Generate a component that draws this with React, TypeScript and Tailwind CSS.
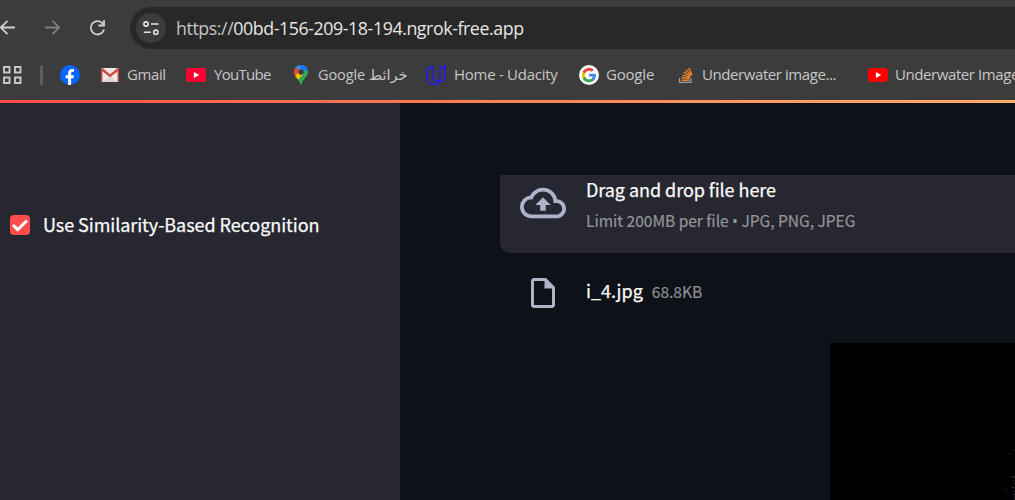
import type { ReactNode } from 'react';

function Bookmark({ icon, label, className, labelClass }: { icon: ReactNode; label?: string; className: string; labelClass?: string }) {
  return (
    <div className={`flex h-5 shrink-0 items-center whitespace-nowrap ${className}`}>
      {icon}
      {label && <span className={`leading-5 ${labelClass ?? ''}`}>{label}</span>}
    </div>
  );
}

function FacebookIcon() {
  return (
    <svg className="h-5 w-5 shrink-0" viewBox="0 0 20 20">
      <circle cx="10" cy="10" r="10" fill="#0866ff" />
      <path d="M8.1 20v-6.7H5.6v-3h2.5V8.600c0-3.400 1.700-4.700 4.300-4.700.8 0 1.200.1 1.600.2v2.700h-1.200c-1.200 0-1.700.5-1.700 1.800v1.700h2.800l-.5 3h-2.300V20a10 10 0 0 1-3 0Z" fill="#fff" />
    </svg>
  );
}

function GmailIcon() {
  return (
    <svg className="h-5 w-5 shrink-0" viewBox="0 0 20 20">
      <rect x="1" y="3" width="18" height="14" rx="1.5" fill="#eceaea" />
      <path d="M3 17 10 11l7 6Z" fill="#d8d6d6" />
      <path d="M1 4.500C1 3.600 1.600 3 2.500 3L10 9.200 17.500 3c.9 0 1.500.6 1.500 1.500v11c0 .9-.6 1.500-1.500 1.500V6.400L10 12.300 2.500 6.400V17C1.600 17 1 16.400 1 15.500Z" fill="#d54b3d" />
    </svg>
  );
}

function YouTubeIcon({ wide }: { wide?: boolean }) {
  return (
    <svg className="h-5 w-5 shrink-0" viewBox="0 0 20 20">
      <rect x="0" y="3" width="20" height="14" rx={wide ? 3.2 : 2.6} fill={wide ? '#ff0000' : '#ff0033'} />
      <path d="m7.900 7 5.300 3-5.300 3Z" fill="#fff" />
    </svg>
  );
}

function MapsIcon() {
  return (
    <svg className="h-5 w-[14px] shrink-0" viewBox="0 0 14 20">
      <clipPath id="pin">
        <path d="M7 0a7 7 0 0 1 7 7c0 2.600-1.400 4.300-3 6.300C9.300 15.400 8.300 16.800 7.600 19.200c-.2.900-1 .9-1.200 0C5.700 16.800 4.700 15.400 3 13.300 1.400 11.300 0 9.600 0 7a7 7 0 0 1 7-7Z" />
      </clipPath>
      <g clipPath="url(#pin)">
        <path d="M0 0h14v20H0Z" fill="#34a853" />
        <path d="M0 0h14v5L7 7Z" fill="#4285f4" />
        <path d="M4 0h10v5l-4.500 1Z" fill="#1a73e8" />
        <path d="M0 0 1.500 2.400 7 7 1.500 12 0 10Z" fill="#ea4335" />
        <path d="m1 11 6-7 2.200 5-6.200 7Z" fill="#fbbc04" />
      </g>
      <circle cx="7" cy="7" r="2.700" fill="#3c3c3c" />
    </svg>
  );
}

function UdacityIcon() {
  return (
    <svg className="h-5 w-5 shrink-0" viewBox="0 0 20 20" fill="none" stroke="#2015ff" strokeWidth="1.500" strokeLinejoin="round">
      <path d="M6.400 1 .9 3.800v8.400c0 4.300 3 7 7 7 4 0 6.200-2.600 6.200-6.800V3.200L19.200.9v9.600c0 3.500-2.200 5.700-6 5.700-4.500 0-6.800-2.200-6.800-6V1Z" />
    </svg>
  );
}

function GoogleIcon() {
  return (
    <svg className="h-5 w-5 shrink-0" viewBox="0 0 20 20">
      <circle cx="10" cy="10" r="10" fill="#fff" />
      <g transform="translate(2.800 2.800) scale(.6)">
        <path fill="#4285f4" d="M23.500 12.300c0-.8-.1-1.600-.2-2.300H12v4.500h6.500a5.600 5.600 0 0 1-2.400 3.600v3h3.900c2.200-2 3.500-5.100 3.500-8.800Z" />
        <path fill="#34a853" d="M12 24c3.200 0 6-1.100 8-2.900l-3.900-3c-1.100.7-2.500 1.100-4.100 1.100-3.100 0-5.800-2.100-6.700-4.900h-4v3.100A12 12 0 0 0 12 24Z" />
        <path fill="#fbbc05" d="M5.300 14.300a7.200 7.200 0 0 1 0-4.600V6.600h-4a12 12 0 0 0 0 10.800Z" />
        <path fill="#ea4335" d="M12 4.800c1.800 0 3.300.6 4.600 1.800L20 3.100A12 12 0 0 0 1.300 6.600l4 3.100C6.200 6.900 8.900 4.800 12 4.800Z" />
      </g>
    </svg>
  );
}

function StackIcon() {
  return (
    <svg className="h-5 w-5 shrink-0" viewBox="0 0 20 20" fill="none">
      <path d="M4.500 13v4.400h11.600V13" stroke="#9a9c9f" strokeWidth="1.200" />
      <g stroke="#f0812a" strokeWidth="1.500">
        <path d="M6.500 15.300h8M6.600 12.800l7.900.8M7.300 10.100l7.600 2.100M8.800 7.200l6.500 4M11 4.700l5.200 5.700M13.800 3l3.200 7" />
      </g>
    </svg>
  );
}

function Toolbar() {
  return (
    <div className="flex h-[49px] items-start pt-[7px]">
      <div className="flex h-[42px] w-[130px] shrink-0 items-center">
        <svg className="h-[42px] w-[130px]" viewBox="0 7 130 42" fill="none" strokeWidth="1.800">
          <path d="M15 27.500H1M7.500 20.800.8 27.500l6.700 6.700" stroke="#d0d0d0" />
          <path d="M45 27.500h14M52.500 20.800l6.700 6.700-6.700 6.700" stroke="#7d7d7d" />
          <path d="M103.400 24.500A6.700 6.700 0 1 0 104 29.500" stroke="#d0d0d0" />
          <path d="M104 20v5.500h-5.600" stroke="#d0d0d0" />
        </svg>
      </div>
      <div className="flex h-[42px] flex-1 items-center rounded-l-[21px] bg-[#282828] pl-[6px]">
        <div className="flex h-[30px] w-[30px] items-center justify-center rounded-full bg-[#3c3c3c]">
          <svg className="h-4 w-4" viewBox="0 0 16 16" fill="none" stroke="#e3e3e3" strokeWidth="1.600">
            <circle cx="3" cy="4" r="2.100" />
            <path d="M8 4h7.500M.8 12.200h7" />
            <circle cx="12.800" cy="12.200" r="2.100" />
          </svg>
        </div>
        <span className="ml-[10px] whitespace-nowrap text-[17.800px] leading-6 tracking-[-0.420px] text-[#e6e6e6]">
          <span className="text-[#c4c4c4]">https://</span>00bd-156-209-18-194.ngrok-free.app
        </span>
      </div>
    </div>
  );
}

function BookmarksBar() {
  return (
    <div className="flex h-[51px] items-start overflow-hidden pt-4 text-[15px] text-[#c7c7c7]">
      <svg className="mt-px ml-[3px] h-[18px] w-[19px] shrink-0" viewBox="0 0 19 18" fill="none" stroke="#c7c7c7" strokeWidth="1.900">
        <path d="M1 1h5.500v5.500H1ZM12 1h5.500v5.500H12ZM1 11.500h5.500V17H1ZM12 11.500h5.500V17H12Z" />
      </svg>
      <div className="ml-[18px] h-5 w-[3px] shrink-0 rounded-full bg-[#5e5e5e]" />
      <Bookmark className="ml-[17px] w-10" icon={<FacebookIcon />} />
      <Bookmark className="w-[86px]" icon={<GmailIcon />} label="Gmail" labelClass="-mt-0.5 ml-[7px] tracking-[-0.400px]" />
      <Bookmark className="w-[108px]" icon={<YouTubeIcon />} label="YouTube" labelClass="-mt-0.5 ml-2 tracking-[-0.700px]" />
      <Bookmark className="w-[132px]" icon={<MapsIcon />} label="Google خرائط" labelClass="ml-[10px] text-[14.500px] tracking-[-0.100px]" />
      <Bookmark className="w-[153px]" icon={<UdacityIcon />} label="Home - Udacity" labelClass="-mt-0.5 ml-2 tracking-[-0.270px]" />
      <Bookmark className="w-[96px]" icon={<GoogleIcon />} label="Google" labelClass="-mt-0.5 ml-[7px] tracking-[-0.200px]" />
      <Bookmark className="w-[193px]" icon={<StackIcon />} label="Underwater image..." labelClass="-mt-0.5 ml-[7px] tracking-[-0.420px]" />
      <Bookmark className="w-[147px]" icon={<YouTubeIcon wide />} label="Underwater Image" labelClass="-mt-0.5 ml-[7px] tracking-[-0.420px]" />
    </div>
  );
}

function Sidebar() {
  return (
    <aside className="w-[400px] shrink-0 bg-[#262730] pt-[110px] pl-[10px]">
      <label className="flex h-6 items-center">
        <span className="flex h-5 w-5 items-center justify-center rounded-[4px] bg-[#ff4b4b]">
          <svg className="h-5 w-5" viewBox="0 0 20 20" fill="none" stroke="#fff" strokeWidth="3">
            <path d="m3 10 4.700 4.600L17 5.500" />
          </svg>
        </span>
        <span className="-mt-[2px] ml-[13px] whitespace-nowrap text-[18px] leading-6 tracking-[-0.060px] text-[#fafafa] [-webkit-text-stroke:0.25px_#fafafa]">Use Similarity-Based Recognition</span>
      </label>
    </aside>
  );
}

function Uploader() {
  return (
    <main className="flex min-w-0 flex-1 flex-col bg-[#0e1117] pt-[72px]">
      <section className="ml-[100px] flex h-[78px] rounded-bl-[10px] bg-[#262730] pl-[20px]">
        <svg className="mt-[5px] h-[46px] w-[46px]" viewBox="0 0 24 24" fill="#aeb3c9">
          <path d="M19.350 10.040A7.490 7.490 0 0 0 12 4C9.110 4 6.600 5.640 5.350 8.040A5.994 5.994 0 0 0 0 14c0 3.310 2.690 6 6 6h13c2.760 0 5-2.240 5-5 0-2.640-2.050-4.780-4.650-4.960zM19 18H6c-2.210 0-4-1.790-4-4s1.790-4 4-4h.71C7.370 7.690 9.480 6 12 6c3.040 0 5.500 2.460 5.500 5.500v.5H19c1.660 0 3 1.340 3 3s-1.340 3-3 3zM8 13h2.550v3h2.900v-3H16l-4-4z" />
        </svg>
        <div className="ml-5 whitespace-nowrap">
          <p className="mt-[2px] text-[18px] leading-6 tracking-[-0.050px] text-[#fafafa] [-webkit-text-stroke:0.25px_#fafafa]">Drag and drop file here</p>
          <p className="mt-[9px] text-[15.500px] leading-5 text-[#94959a] [-webkit-text-stroke:0.2px_#94959a]">
            Limit 200MB per file <span className="font-['Open_Sans']">•</span> JPG, PNG, JPEG
          </p>
        </div>
      </section>
      <div className="mt-[25px] ml-[100px] flex h-[30px] items-center pl-[25px]">
        <svg className="h-9 w-9 shrink-0" viewBox="0 0 24 24" fill="#aeb3c9">
          <path d="M6 2c-1.100 0-1.990.9-1.990 2L4 20c0 1.100.89 2 1.990 2H18c1.100 0 2-.9 2-2V8l-6-6H6zm0 18V4h7v5h5v11H6z" />
        </svg>
        <span className="-mt-[6px] ml-[25px] text-[18px] leading-6 text-[#fafafa] [-webkit-text-stroke:0.25px_#fafafa]">i_4.jpg</span>
        <span className="-mt-[4px] ml-[9px] text-[15.500px] leading-5 text-[#8c8e93] [-webkit-text-stroke:0.2px_#8c8e93]">68.8KB</span>
      </div>
      <div className="mt-[35px] ml-[430px] flex flex-1 justify-end bg-black">
        <svg className="mt-[90px] h-[67px] w-[12px]" viewBox="0 0 12 67">
          <path d="M10 17h2v1h-2ZM6 20h2v1H6ZM9 43h3v2H9ZM2 56h2v1H2ZM10 50h2v1h-2ZM9 58h3v1H9ZM11 63h1v4h-1Z" fill="#1c1c24" />
          <path d="M10 47h1v1h-1ZM9 54h2v1H9ZM10 61h2v1h-2Z" fill="#353844" />
        </svg>
      </div>
    </main>
  );
}

export default function App() {
  return (
    <div className="flex h-[500px] w-[1015px] flex-col overflow-hidden bg-[#3c3c3c]">
      <header className="h-[100px] shrink-0 font-['Open_Sans','DejaVu_Sans',sans-serif]">
        <Toolbar />
        <BookmarksBar />
      </header>
      <div className="h-[3px] shrink-0 bg-linear-to-r from-[#ff4b4b] to-[#ffad69]" />
      <div className="flex min-h-0 flex-1 font-['Noto_Sans_CJK_SC',sans-serif]">
        <Sidebar />
        <Uploader />
      </div>
    </div>
  );
}
